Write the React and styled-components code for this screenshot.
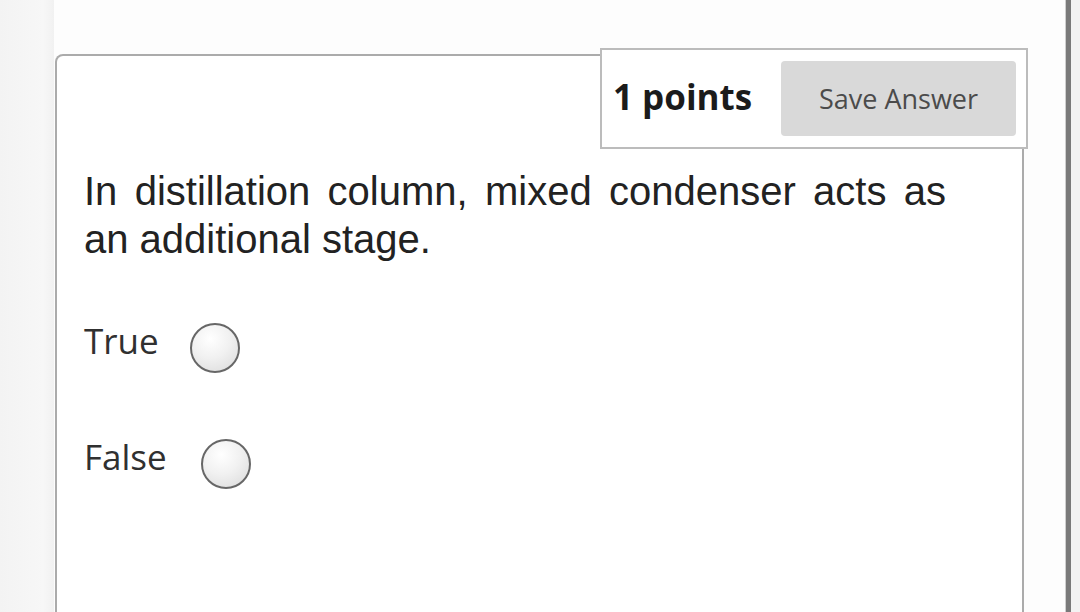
import React from "react";
import styled, { createGlobalStyle } from "styled-components";

const GlobalStyle = createGlobalStyle`
  html, body {
    margin: 0;
    padding: 0;
    background: #ffffff;
    font-family: "Open Sans", "Liberation Sans", sans-serif;
  }
  * {
    box-sizing: border-box;
  }
`;

const Page = styled.div`
  display: flex;
  width: 1080px;
  height: 612px;
  overflow: hidden;
`;

const LeftGutter = styled.div`
  width: 54px;
  flex: none;
  background: linear-gradient(to right, #f3f3f3, #f7f7f7 80%, #f1f1f1);
`;

const Main = styled.div`
  flex: 1;
  padding: 54px 41px 0 1px;
  background: #fdfdfd;
`;

const RightRail = styled.div`
  display: flex;
  flex: none;
  width: 15px;
`;

const RailLine = styled.div`
  width: ${(p) => p.w}px;
  background: ${(p) => p.color};
`;

const Card = styled.div`
  position: relative;
  height: 100%;
  padding: 111px 0 0 27px;
  background: #ffffff;
  border: 2px solid #ababab;
  border-bottom: none;
  border-radius: 8px 8px 0 0;
`;

// points badge floats over the card's top-right edge
const PointsBox = styled.div`
  position: absolute;
  top: -8px;
  left: 543px;
  width: 428px;
  height: 101px;
  display: flex;
  align-items: center;
  justify-content: space-between;
  padding: 0 10px 0 11px;
  background: #ffffff;
  border: 2px solid #bcbcbc;
`;

const Points = styled.span`
  font-family: "Open Sans", sans-serif;
  font-weight: 700;
  font-size: 35px;
  color: #1b1b1b;
  margin-bottom: 4px;
`;

const SaveButton = styled.button`
  width: 235px;
  height: 75px;
  border: none;
  border-radius: 4px;
  background: #d9d9d9;
  font-family: "Open Sans", sans-serif;
  font-size: 27px;
  color: #4b4b4b;
  cursor: pointer;
`;

const Question = styled.p`
  margin: 0;
  width: 862px;
  font-family: "Liberation Sans", Arial, sans-serif;
  font-size: 40px;
  line-height: 48px;
  color: #222222;
  text-align: justify;
`;

const Options = styled.div`
  display: flex;
  flex-direction: column;
  gap: 56px;
  margin-top: 55px;
`;

const OptionRow = styled.label`
  display: flex;
  align-items: center;
  height: 60px;
  gap: ${(p) => p.gap}px;
`;

const OptionText = styled.span`
  font-family: "Open Sans", sans-serif;
  font-size: 35px;
  line-height: 40px;
  color: #303030;
  margin-bottom: 15px;
`;

const Radio = styled.span`
  width: 50px;
  height: 50px;
  border-radius: 50%;
  border: 2px solid #676767;
  background: radial-gradient(circle at 40% 30%, #ffffff 0%, #f1f1f1 45%, #d9d9d9 100%);
`;

const options = [
  { label: "True", gap: 31 },
  { label: "False", gap: 34 },
];

export default function App() {
  return (
    <>
      <GlobalStyle />
      <Page>
        <LeftGutter />
        <Main>
          <Card>
            <PointsBox>
              <Points>1 points</Points>
              <SaveButton>Save Answer</SaveButton>
            </PointsBox>
            <Question>
              In distillation column, mixed condenser acts as an additional stage.
            </Question>
            <Options>
              {options.map((o) => (
                <OptionRow key={o.label} gap={o.gap}>
                  <OptionText>{o.label}</OptionText>
                  <Radio />
                </OptionRow>
              ))}
            </Options>
          </Card>
        </Main>
        <RightRail>
          <RailLine w={1} color="#cfcfcf" />
          <RailLine w={5} color="#7a7a7a" />
          <RailLine w={9} color="#f3f3f3" />
        </RightRail>
      </Page>
    </>
  );
}
